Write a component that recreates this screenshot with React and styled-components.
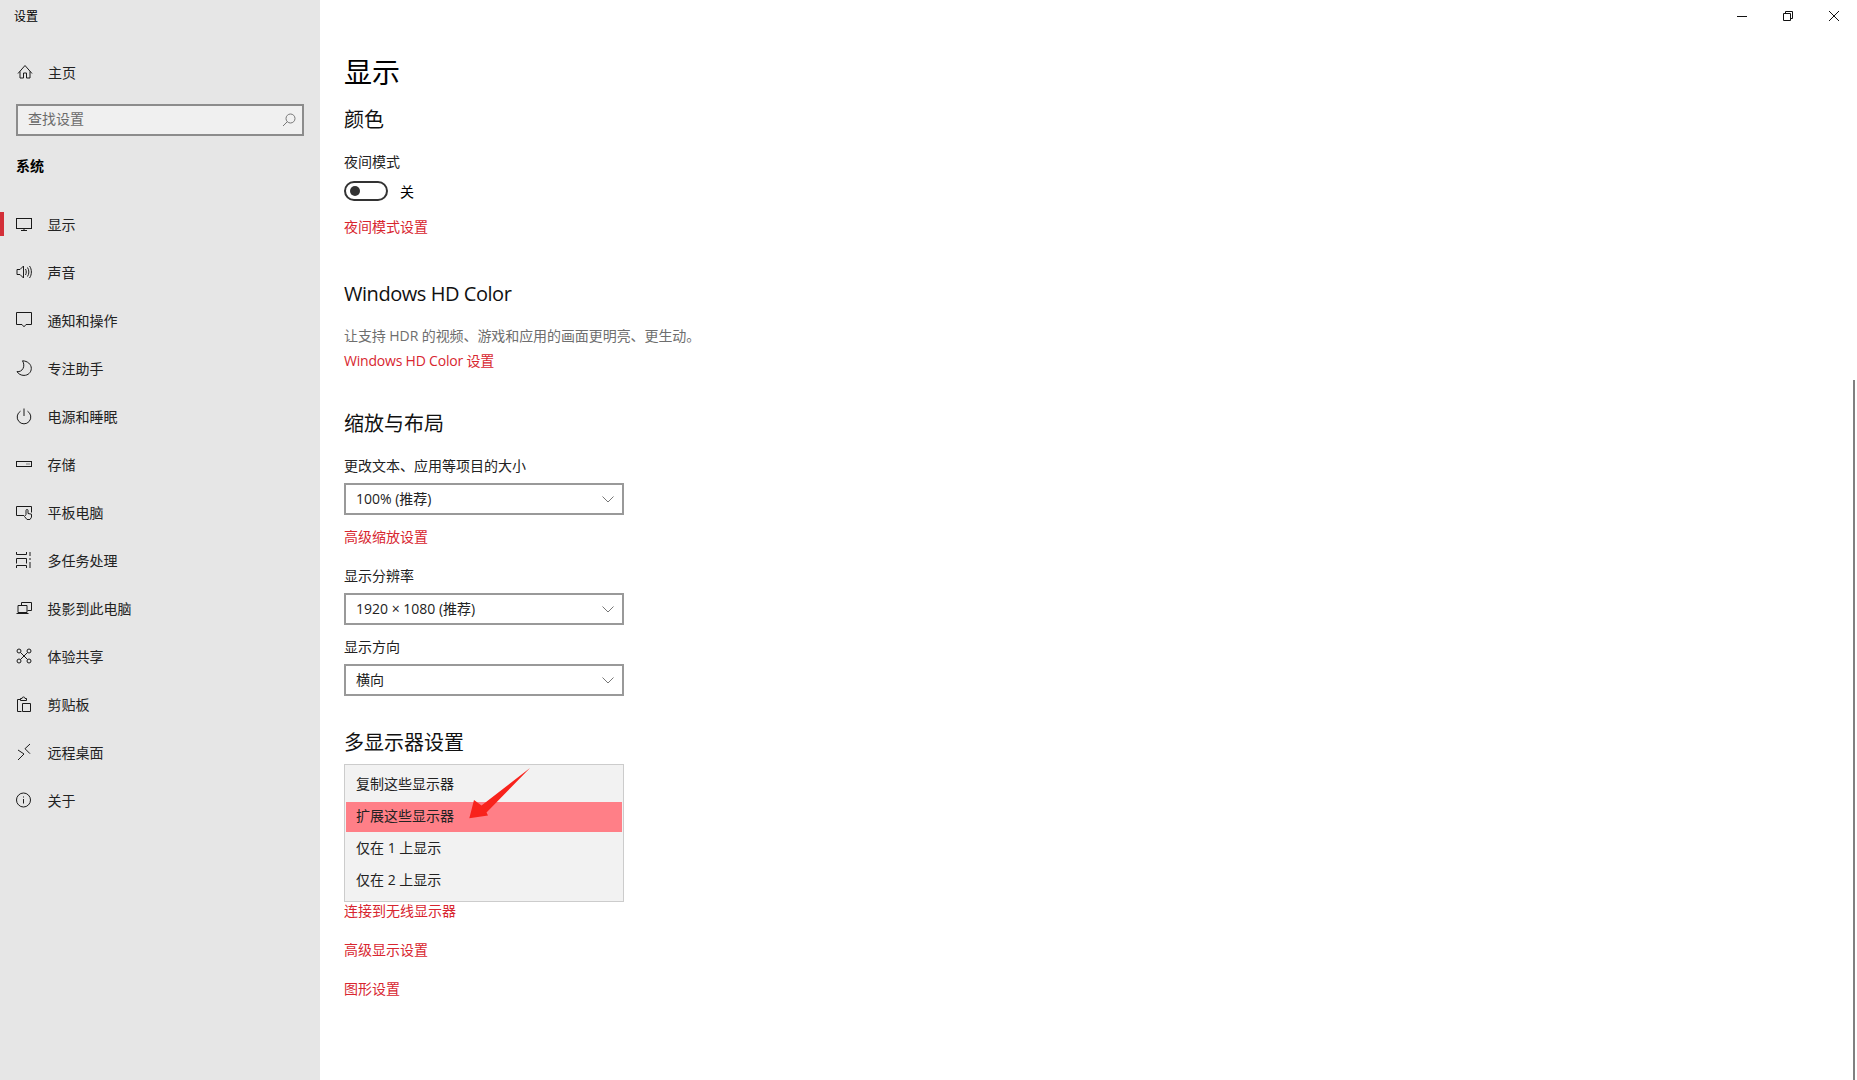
import React from 'react'
import styled, { createGlobalStyle } from 'styled-components'

const GlobalStyle = createGlobalStyle`
  html, body {
    margin: 0;
    height: 100%;
    overflow: hidden;
    background: #fff;
  }
  body {
    font-family: "Open Sans", "Noto Sans CJK SC", sans-serif;
    font-size: 14px;
    color: #000;
  }
`

const Page = styled.div`
  display: grid;
  grid-template-columns: 320px 1fr;
  height: 1080px;
`

const Sidebar = styled.aside`
  background: #e6e6e6;
  display: flex;
  flex-direction: column;
`

const AppName = styled.div`
  box-sizing: border-box;
  height: 32px;
  line-height: 32px;
  padding: 1px 0 0 14px;
  font-size: 12px;
`

const NavRow = styled.div`
  position: relative;
  height: 48px;
  display: flex;
  align-items: center;
  gap: 15.5px;
  padding-left: 16px;
  color: #222;
  ${(p) => p.$active && `
    &::before {
      content: '';
      position: absolute;
      left: 0;
      top: 12px;
      width: 4px;
      height: 24px;
      background: #d32f38;
    }
  `}
`

const HomeRow = styled(NavRow)`
  margin-top: 16px;
  gap: 16px;
`

const SearchBox = styled.div`
  box-sizing: border-box;
  margin: 8px 0 0 16px;
  width: 288px;
  height: 32px;
  border: 2px solid #8c8c8c;
  background: #f0f0f0;
  display: flex;
  align-items: center;
  justify-content: space-between;
  padding: 0 6px 0 10px;
  color: #6b6b6b;
`

const SearchHint = styled.span`
  margin-top: -5px;
`

const SectionLabel = styled.div`
  margin: 20px 0 24px 16px;
  height: 20px;
  line-height: 20px;
  font-weight: 700;
`

const Main = styled.main`
  position: relative;
  padding-left: 24px;
  display: flex;
  flex-direction: column;
  align-items: flex-start;
`

const WindowBar = styled.div`
  align-self: stretch;
  height: 32px;
  display: flex;
  justify-content: flex-end;
`

const WindowButton = styled.div`
  width: 46px;
  display: flex;
  align-items: center;
  justify-content: center;
`

const PageTitle = styled.h1`
  margin: 20px 0 0;
  height: 40px;
  line-height: 40px;
  font-size: 28px;
  font-weight: 400;
`

const SectionTitle = styled.h2`
  margin: ${(p) => p.$mt}px 0 0;
  height: 28px;
  line-height: 28px;
  font-size: 20px;
  font-weight: 400;
  color: #111;
  letter-spacing: ${(p) => p.$tight || 0}px;
`

const Label = styled.div`
  margin-top: ${(p) => p.$mt}px;
  height: 20px;
  line-height: 20px;
  color: #222;
`

const Description = styled(Label)`
  color: #6e6e6e;
  letter-spacing: -0.08px;
`

const SettingLink = styled.a`
  display: block;
  margin-top: ${(p) => p.$mt}px;
  height: ${(p) => p.$h || 20}px;
  line-height: ${(p) => p.$h || 20}px;
  color: #d8262f;
  letter-spacing: ${(p) => p.$tight || 0}px;
`

const ToggleRow = styled.div`
  margin-top: 9px;
  height: 20px;
  display: flex;
  align-items: center;
  gap: 12px;
`

const ToggleTrack = styled.div`
  box-sizing: border-box;
  width: 44px;
  height: 20px;
  border: 2px solid #333;
  border-radius: 10px;
  display: flex;
  align-items: center;
  padding-left: 4px;
`

const ToggleKnob = styled.div`
  width: 10px;
  height: 10px;
  border-radius: 50%;
  background: #333;
`

const Select = styled.div`
  box-sizing: border-box;
  margin-top: 7px;
  width: 280px;
  height: 32px;
  border: 2px solid #999;
  display: flex;
  align-items: center;
  justify-content: space-between;
  padding: 0 8px 0 10px;
  color: #222;
  line-height: 26px;
`

const DropdownList = styled.div`
  position: relative;
  box-sizing: border-box;
  margin-top: ${(p) => p.$mt}px;
  width: 280px;
  height: 138px;
  border: 1px solid #ccc;
  background: #f2f2f2;
  padding: 5px 1px;
  display: flex;
  flex-direction: column;
  gap: 2px;
`

const DropdownItem = styled.div`
  height: 30px;
  line-height: 28px;
  padding-left: 10px;
  background: ${(p) => (p.$selected ? '#ff7f87' : 'transparent')};
  color: #222;
`

const ArrowMark = styled.svg`
  position: absolute;
  left: 119px;
  top: 0;
`

const Scrollbar = styled.div`
  position: absolute;
  right: 2px;
  top: 380px;
  bottom: 0;
  width: 2px;
  background: #808080;
`

const Icon = ({ children, color = '#1a1a1a' }) => (
  <svg width="16" height="16" viewBox="0 0 16 16" fill="none" stroke={color} strokeWidth="1" style={{ overflow: 'visible', flex: 'none' }}>
    {children}
  </svg>
)

const navItems = [
  ['显示', <><rect x=".5" y="2.5" width="15" height="10" /><path d="M8 12.5v2M5 14.5h6" /></>],
  ['声音', <path d="M1 5.5h3l3.5-3.5v12L4 10.5H1zM9.5 5c1 1.8 1 4.2 0 6M11.5 3.5c1.8 2.6 1.800 6.400 0 9M13.500 2c2.500 3.400 2.500 8.600 0 12" />],
  ['通知和操作', <path d="M.5.5h15v12h-5.5l-2 2.3-2-2.300H.5z" />],
  ['专注助手', <path d="M6.500.8c5 .2 8.800 3.400 8.800 7.600 0 4-3.200 7-7.300 7-3 0-5.600-1.400-7-3.800 5.400.8 8.800-5.400 5.500-10.800z" />],
  ['电源和睡眠', <path d="M4.500 3.200a6.800 6.800 0 1 0 7 0M8 .5v7.500" />],
  ['存储', <><rect x=".5" y="5.500" width="15" height="5" /><path d="M10.500 8h1M12.500 8h1" /></>],
  ['平板电脑', <path d="M8 11.500H.5v-9h15v6M10 10.500V6.500a1 1 0 0 1 2 0v3l3.500.7v3l-1.500 2.300h-3l-2.500-3z" />],
  ['多任务处理', <><path d="M.5 0v2.500h10V0M.5 16v-2.500h10V16M14 0v4M14 6v2M14 10v6" /><path d="M.5 11.500v-5h10v5" /></>],
  ['投影到此电脑', <path d="M5.500 5V2.500h10v8h-4M2 5.500h9v7H2zM.5 13.500h12" />],
  ['体验共享', <><circle cx="3" cy="3" r="2" /><circle cx="13" cy="3" r="2" /><circle cx="3" cy="13" r="2" /><circle cx="13" cy="13" r="2" /><path d="M4.500 4.500l7 7M11.500 4.500l-7 7" /></>],
  ['剪贴板', <path d="M4.500 3.500h-3v12h4M4.500 4.500V2.500h1.500a1.500 1.500 0 0 1 3 0h1.500v2zM6.500 7.500h8v8h-8z" />],
  ['远程桌面', <path d="M2 6l6 4-6 6M14 0L9 4.700l5 5" />],
  ['关于', <><circle cx="7.500" cy="8" r="7" /><path d="M7.500 7v4.500M7.500 4.500v1" /></>],
]

const Chevron = () => (
  <svg width="12" height="7" viewBox="0 0 12 7" fill="none" stroke="#777" strokeWidth="1">
    <path d="M.5.5L6 6l5.500-5.500" />
  </svg>
)

const App = () => (
  <Page>
    <GlobalStyle />
    <Sidebar>
      <AppName>设置</AppName>
      <HomeRow>
        <Icon><path d="M2 9.500L9 1.500l7 8M4 7.500V14h3.500v-5h3v5H14V7.500" /></Icon>
        主页
      </HomeRow>
      <SearchBox>
        <SearchHint>查找设置</SearchHint>
        <svg width="14" height="14" viewBox="0 0 14 14" fill="none" stroke="#777" strokeWidth="1">
          <circle cx="8.500" cy="5.500" r="4.500" />
          <path d="M5.300 8.700L1 13" />
        </svg>
      </SearchBox>
      <SectionLabel>系统</SectionLabel>
      {navItems.map(([name, icon], i) => (
        <NavRow key={name} $active={i === 0}>
          <Icon>{icon}</Icon>
          {name}
        </NavRow>
      ))}
    </Sidebar>
    <Main>
      <WindowBar>
        <WindowButton>
          <svg width="10" height="10" viewBox="0 0 10 10" fill="none" stroke="#111"><path d="M0 5.500h10" /></svg>
        </WindowButton>
        <WindowButton>
          <svg width="10" height="10" viewBox="0 0 10 10" fill="none" stroke="#111"><path d="M.5 2.500h7v7h-7zM2.500 2.500v-2h7v7h-2" /></svg>
        </WindowButton>
        <WindowButton>
          <svg width="10" height="10" viewBox="0 0 10 10" fill="none" stroke="#111"><path d="M0 0l10 10M10 0L0 10" /></svg>
        </WindowButton>
      </WindowBar>
      <PageTitle>显示</PageTitle>
      <SectionTitle $mt={14}>颜色</SectionTitle>
      <Label $mt={18}>夜间模式</Label>
      <ToggleRow>
        <ToggleTrack><ToggleKnob /></ToggleTrack>
        关
      </ToggleRow>
      <SettingLink $mt={16}>夜间模式设置</SettingLink>

      <SectionTitle $mt={43} $tight={-0.45}>Windows HD Color</SectionTitle>
      <Description $mt={18}>让支持 HDR 的视频、游戏和应用的画面更明亮、更生动。</Description>
      <SettingLink $mt={5} $tight={-0.2}>Windows HD Color 设置</SettingLink>

      <SectionTitle $mt={39}>缩放与布局</SectionTitle>
      <Label $mt={18}>更改文本、应用等项目的大小</Label>
      <Select>100% (推荐)<Chevron /></Select>
      <SettingLink $mt={12}>高级缩放设置</SettingLink>
      <Label $mt={19}>显示分辨率</Label>
      <Select>1920 × 1080 (推荐)<Chevron /></Select>
      <Label $mt={12}>显示方向</Label>
      <Select>横向<Chevron /></Select>

      <SectionTitle $mt={33}>多显示器设置</SectionTitle>
      <DropdownList $mt={7}>
        <DropdownItem>复制这些显示器</DropdownItem>
        <DropdownItem $selected>扩展这些显示器</DropdownItem>
        <DropdownItem>仅在 1 上显示</DropdownItem>
        <DropdownItem>仅在 2 上显示</DropdownItem>
        <ArrowMark width="70" height="60" viewBox="0 0 70 60">
          <path d="M5.300 53.300L10 35l7.500 5.500L66 3 22.500 47.500l1.500 3z" fill="#f8231c" />
        </ArrowMark>
      </DropdownList>
      <SettingLink $mt={0} $h={18}>连接到无线显示器</SettingLink>
      <SettingLink $mt={20}>高级显示设置</SettingLink>
      <SettingLink $mt={19}>图形设置</SettingLink>
      <Scrollbar />
    </Main>
  </Page>
)

export default App
